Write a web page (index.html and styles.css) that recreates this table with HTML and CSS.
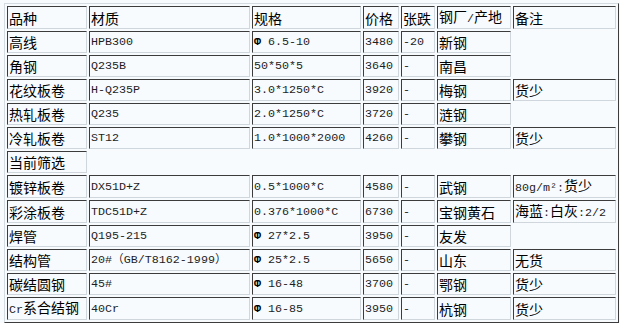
FILE: index.html
```html
<!DOCTYPE html>
<html lang="zh-CN">
<head>
<meta charset="utf-8">
<title>钢材价格</title>
<link rel="stylesheet" href="styles.css">
</head>
<body>
<table class="grid">
  <tr>
    <td class="c1">品种</td>
    <td class="c2">材质</td>
    <td class="c3">规格</td>
    <td class="c4">价格</td>
    <td class="c5">张跌</td>
    <td class="c6">钢厂<span class="en">/</span>产地</td>
    <td class="c7">备注</td>
  </tr>
  <tr>
    <td>高线</td><td class="en">HPB300</td><td class="en"><b class="phi">Φ</b> 6.5-10</td><td class="en">3480</td><td class="en">-20</td><td>新钢</td>
  </tr>
  <tr>
    <td>角钢</td><td class="en">Q235B</td><td class="en">50*50*5</td><td class="en">3640</td><td class="en">-</td><td>南昌</td>
  </tr>
  <tr>
    <td>花纹板卷</td><td class="en">H-Q235P</td><td class="en">3.0*1250*C</td><td class="en">3920</td><td class="en">-</td><td>梅钢</td><td>货少</td>
  </tr>
  <tr>
    <td>热轧板卷</td><td class="en">Q235</td><td class="en">2.0*1250*C</td><td class="en">3720</td><td class="en">-</td><td>涟钢</td>
  </tr>
  <tr>
    <td>冷轧板卷</td><td class="en">ST12</td><td class="en">1.0*1000*2000</td><td class="en">4260</td><td class="en">-</td><td>攀钢</td><td>货少</td>
  </tr>
  <tr>
    <td>当前筛选</td>
  </tr>
  <tr>
    <td>镀锌板卷</td><td class="en">DX51D+Z</td><td class="en">0.5*1000*C</td><td class="en">4580</td><td class="en">-</td><td>武钢</td><td><span class="en">80g/m²:</span>货少</td>
  </tr>
  <tr>
    <td>彩涂板卷</td><td class="en">TDC51D+Z</td><td class="en">0.376*1000*C</td><td class="en">6730</td><td class="en">-</td><td>宝钢黄石</td><td>海蓝<span class="en">:</span>白灰<span class="en">:2/2</span></td>
  </tr>
  <tr>
    <td>焊管</td><td class="en">Q195-215</td><td class="en"><b class="phi">Φ</b> 27*2.5</td><td class="en">3950</td><td class="en">-</td><td>友发</td>
  </tr>
  <tr>
    <td>结构管</td><td class="en">20#（GB/T8162-1999）</td><td class="en"><b class="phi">Φ</b> 25*2.5</td><td class="en">5650</td><td class="en">-</td><td>山东</td><td>无货</td>
  </tr>
  <tr>
    <td>碳结圆钢</td><td class="en">45#</td><td class="en"><b class="phi">Φ</b> 16-48</td><td class="en">3700</td><td class="en">-</td><td>鄂钢</td><td>货少</td>
  </tr>
  <tr>
    <td><span class="en">Cr</span>系合结钢</td><td class="en">40Cr</td><td class="en"><b class="phi">Φ</b> 16-85</td><td class="en">3950</td><td class="en">-</td><td>杭钢</td><td>货少</td>
  </tr>
</table>
</body>
</html>
```
FILE: styles.css
```css
html, body {
  margin: 0;
  padding: 0;
  background: #f7fbfe;
}

body {
  padding: 3px 0 0 4px;
  font-family: "Noto Sans CJK SC", "Noto Sans", sans-serif;
  font-size: 14px;
  color: #000;
}

.grid {
  table-layout: fixed;
  border-collapse: separate;
  border-spacing: 2px;
  width: 613px;
  border-style: solid;
  border-width: 1px;
  border-color: #d4dbe1 #3c3c3c #3c3c3c #d4dbe1;
}

.grid td {
  box-sizing: border-box;
  height: 22px;
  padding: 0 1px;
  border-style: solid;
  border-width: 1px;
  border-color: #3c3c3c #cfd6dc #cfd6dc #3c3c3c;
  line-height: 18px;
  white-space: nowrap;
  overflow: hidden;
  vertical-align: middle;
}

.c1 { width: 80px; }
.c2 { width: 161px; }
.c3 { width: 109px; }
.c4 { width: 36px; }
.c5 { width: 34px; }
.c6 { width: 74px; }
.c7 { width: 103px; }

.en {
  font-family: "Liberation Mono", "Noto Sans CJK SC", monospace;
  font-size: 11.7px;
  color: #1e1e1e;
}

.phi {
  font-weight: bold;
  color: #000;
}
```
